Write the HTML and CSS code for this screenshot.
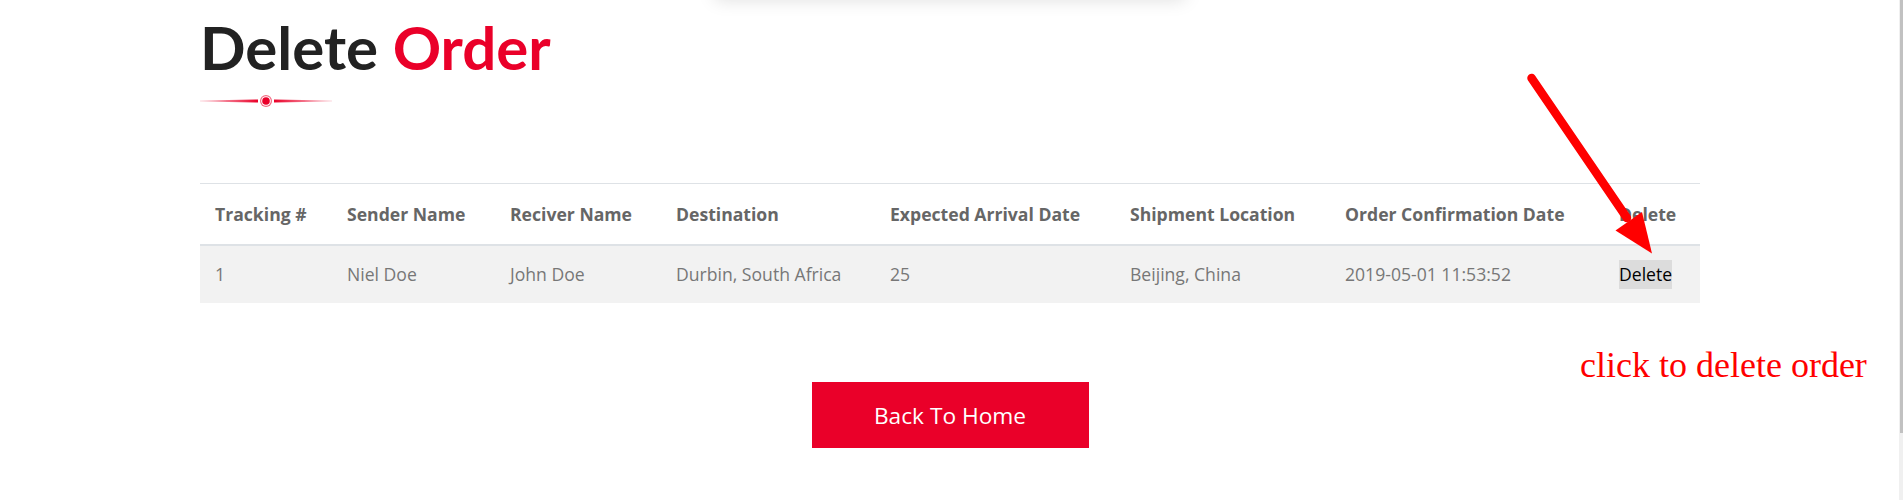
FILE: index.html
```html
<!DOCTYPE html>
<html lang="en">
<head>
<meta charset="utf-8">
<title>Delete Order</title>
<link rel="stylesheet" href="styles.css">
</head>
<body>
<div class="top-shadow"></div>
<main class="page">
  <h1 class="title">Delete <span class="accent">Order</span></h1>
  <svg class="divider" width="132" height="12" viewBox="0 0 132 12">
    <defs>
      <linearGradient id="gl" x1="0" x2="1" y1="0" y2="0">
        <stop offset="0" stop-color="#ea0029" stop-opacity="0.15"/>
        <stop offset="1" stop-color="#ea0029" stop-opacity="1"/>
      </linearGradient>
      <linearGradient id="gr" x1="1" x2="0" y1="0" y2="0">
        <stop offset="0" stop-color="#ea0029" stop-opacity="0.15"/>
        <stop offset="1" stop-color="#ea0029" stop-opacity="1"/>
      </linearGradient>
    </defs>
    <polygon points="0,5.5 58,4.5 58,7.5 0,6.5" fill="url(#gl)"/>
    <polygon points="132,5.5 74,4.5 74,7.5 132,6.5" fill="url(#gr)"/>
    <circle cx="66" cy="6" r="6" fill="#f26a82"/>
    <circle cx="66" cy="6" r="4.8" fill="#ffffff"/>
    <circle cx="66" cy="6" r="3.8" fill="#ea0029"/>
  </svg>

  <table class="orders">
    <colgroup>
      <col class="c1"><col class="c2"><col class="c3"><col class="c4">
      <col class="c5"><col class="c6"><col class="c7"><col class="c8">
    </colgroup>
    <thead>
      <tr>
        <th>Tracking #</th>
        <th>Sender Name</th>
        <th>Reciver Name</th>
        <th>Destination</th>
        <th>Expected Arrival Date</th>
        <th>Shipment Location</th>
        <th>Order Confirmation Date</th>
        <th>Delete</th>
      </tr>
    </thead>
    <tbody>
      <tr>
        <td>1</td>
        <td>Niel Doe</td>
        <td>John Doe</td>
        <td>Durbin, South Africa</td>
        <td>25</td>
        <td>Beijing, China</td>
        <td>2019-05-01 11:53:52</td>
        <td><button class="del-btn" type="button">Delete</button></td>
      </tr>
    </tbody>
  </table>

  <div class="actions">
    <a class="home-btn" href="#">Back To Home</a>
  </div>
</main>

<div class="note">click to delete order</div>
<svg class="arrow" width="140" height="200" viewBox="1520 65 140 200">
  <line x1="1531.5" y1="78" x2="1627" y2="218" stroke="#ff0000" stroke-width="8.5" stroke-linecap="round"/>
  <polygon points="1615.5,230.5 1642,212 1652,253.5" fill="#ff0000"/>
</svg>

<div class="scrollbar"><div class="thumb"></div></div>
</body>
</html>
```

FILE: styles.css
```css
html, body {
  margin: 0;
  height: 500px;
  overflow: hidden;
  background: #ffffff;
}

body {
  position: relative;
  padding-right: 3px;
  font-family: "Open Sans", "Liberation Sans", sans-serif;
}

.top-shadow {
  position: absolute;
  top: -40px;
  left: 715px;
  width: 470px;
  height: 40px;
  background: #ffffff;
  box-shadow: 0 0 18px rgba(0, 0, 0, 0.13);
}

.page {
  width: 1500px;
  margin: 0 auto;
  padding-top: 11px;
}

.title {
  margin: 0;
  font-family: Lato, "Open Sans", sans-serif;
  font-weight: 700;
  font-size: 60px;
  line-height: 1.2;
  color: #222222;
}

.accent {
  color: #ea0029;
}

.divider {
  display: block;
  margin-top: 12px;
}

.orders {
  width: 100%;
  margin-top: 76px;
  border-spacing: 0;
  font-size: 17.6px;
}

.c1 { width: 132px; }
.c2 { width: 163px; }
.c3 { width: 166px; }
.c4 { width: 214px; }
.c5 { width: 240px; }
.c6 { width: 215px; }
.c7 { width: 274px; }
.c8 { width: 96px; }

.orders th {
  text-align: left;
  font-weight: 700;
  color: #666666;
  line-height: 24px;
  padding: 18px 15px;
  border-top: 1px solid #dee2e6;
  border-bottom: 2px solid #dee2e6;
  white-space: nowrap;
}

.orders td {
  text-align: left;
  color: #777777;
  line-height: 25px;
  padding: 16px 15px;
  background: #f2f2f2;
  white-space: nowrap;
}

.del-btn {
  display: inline-block;
  margin: -2px 0;
  padding: 2px 0;
  border: none;
  background: #dcdcdc;
  color: #000000;
  font-family: "Open Sans", "Liberation Sans", sans-serif;
  font-size: 17.6px;
  line-height: 25px;
}

.actions {
  display: flex;
  justify-content: center;
  margin-top: 79px;
}

.home-btn {
  display: flex;
  align-items: center;
  justify-content: center;
  width: 277px;
  height: 66px;
  background: #ea0029;
  color: #ffffff;
  font-size: 22.7px;
  text-decoration: none;
}

.note {
  position: absolute;
  left: 1580px;
  top: 340px;
  font-family: "Liberation Serif", "Times New Roman", serif;
  font-size: 36px;
  line-height: 50px;
  color: #ff0000;
  white-space: nowrap;
}

.arrow {
  position: absolute;
  left: 1520px;
  top: 65px;
}

.scrollbar {
  position: absolute;
  top: 0;
  right: 0;
  width: 4px;
  height: 500px;
  background: #f0f0f0;
}

.thumb {
  margin-left: 1px;
  width: 3px;
  height: 433px;
  background: #c1c1c1;
}
```
